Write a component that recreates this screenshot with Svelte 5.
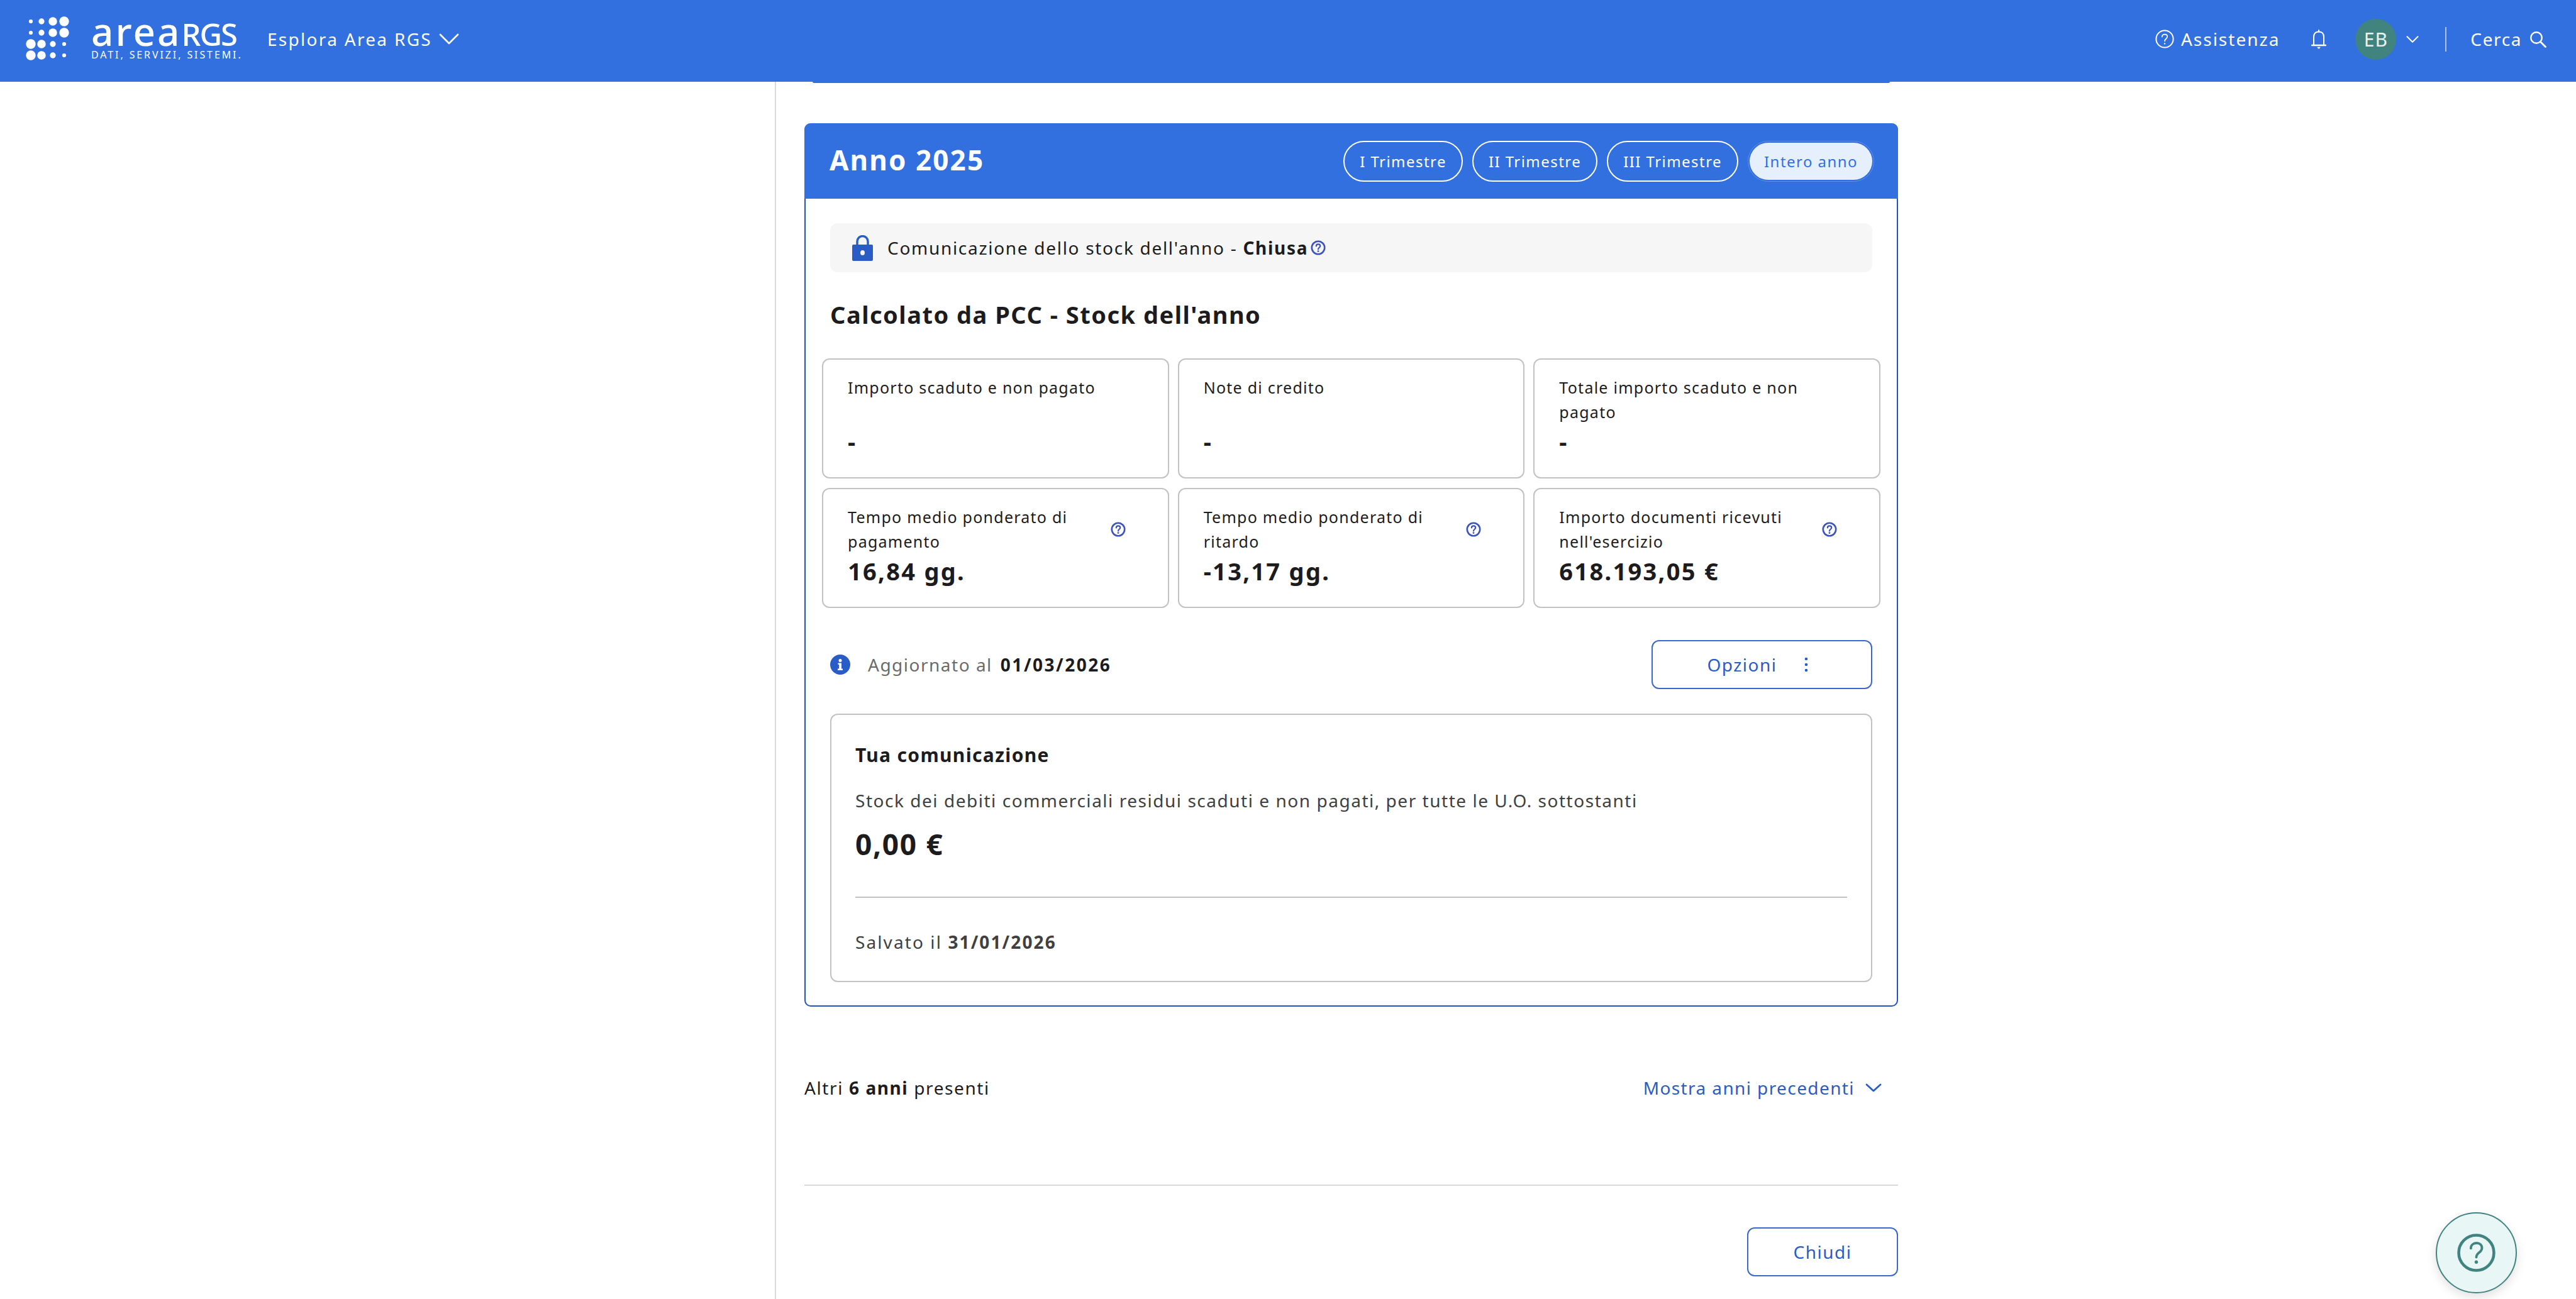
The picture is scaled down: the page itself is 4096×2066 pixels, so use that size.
<script>
  const logoDots = [
    [6.2, 9.3, 13.5, 15.4],
    [6.2, 9.3, 13.5, 15.4],
    [15.4, 13.5, 9.3, 6.2],
    [15.4, 13.5, 9.3, 6.2]
  ];
  const xs = [9, 26, 44, 62];
  const ys = [8, 26, 44, 62];
  const tiles = [
    { label: 'Importo scaduto e non pagato', value: '-', help: false },
    { label: 'Note di credito', value: '-', help: false },
    { label: 'Totale importo scaduto e non pagato', value: '-', help: false },
    { label: 'Tempo medio ponderato di pagamento', value: '16,84 gg.', help: true },
    { label: 'Tempo medio ponderato di ritardo', value: '-13,17 gg.', help: true },
    { label: "Importo documenti ricevuti nell'esercizio", value: '618.193,05 €', help: true }
  ];
  const pills = ['I Trimestre', 'II Trimestre', 'III Trimestre'];
</script>

{#snippet helpIcon(cls)}
  <svg class={cls} viewBox="0 0 24 24" fill="none" aria-hidden="true">
    <circle cx="12" cy="12" r="10.2" stroke="currentColor" stroke-width="2.6" />
    <path d="M8.9 9.4c0-1.8 1.4-3 3.2-3s3.1 1.1 3.1 2.8c0 2.5-3.2 2.6-3.2 5.2" stroke="currentColor" stroke-width="2.2" stroke-linecap="round" />
    <circle cx="12" cy="17.6" r="1.4" fill="currentColor" />
  </svg>
{/snippet}

<div class="app">
  <header class="topbar">
    <div class="logo">
      <svg class="dots" viewBox="0 0 72 72" aria-hidden="true">
        {#each logoDots as row, r}
          {#each row as d, c}
            <circle cx={xs[c]} cy={ys[r]} r={d / 2} fill="#fff" />
          {/each}
        {/each}
      </svg>
      <div class="wordmark">
        <div class="brand"><span class="brand-a">area</span><span class="brand-b">RGS</span></div>
        <div class="tagline">DATI, SERVIZI, SISTEMI.</div>
      </div>
    </div>
    <button class="explore">
      <span>Esplora Area RGS</span>
      <svg viewBox="0 0 32 18" class="chev-lg" fill="none" aria-hidden="true"><path d="M2 2l14 14L30 2" stroke="#fff" stroke-width="2.6" stroke-linecap="round" stroke-linejoin="round" /></svg>
    </button>

    <div class="right">
      <div class="assist">
        <svg class="assist-ic" viewBox="0 0 30 30" fill="none" aria-hidden="true">
          <circle cx="15" cy="15" r="13.6" stroke="#fff" stroke-width="2" />
          <path d="M10.8 11.6c0-2.4 1.9-4 4.3-4s4.1 1.5 4.1 3.7c0 3.4-4.2 3.4-4.2 7" stroke="#fff" stroke-width="1.8" stroke-linecap="round" />
          <circle cx="15" cy="22.4" r="1.2" fill="#fff" />
        </svg>
        <span>Assistenza</span>
      </div>
      <svg class="bell" viewBox="0 0 24 31" fill="none" aria-hidden="true">
        <path d="M4 24V11.5C4 6.5 7.2 3.4 12 3.4s8 3.1 8 8.1V24" stroke="#fff" stroke-width="2" />
        <path d="M1 25h22" stroke="#fff" stroke-width="2.4" stroke-linecap="round" />
        <path d="M12 1v2.4" stroke="#fff" stroke-width="2" stroke-linecap="round" />
        <path d="M9.5 27.8h5c-.3 1.6-1.2 2.6-2.5 2.6s-2.2-1-2.5-2.6z" fill="#fff" />
      </svg>
      <div class="avatar">EB</div>
      <svg class="chev-sm" viewBox="0 0 20 11" fill="none" aria-hidden="true"><path d="M1.5 1.2L10 9.8l8.500-8.600" stroke="#fff" stroke-width="2" stroke-linecap="round" stroke-linejoin="round" /></svg>
      <div class="sep"></div>
      <div class="search">
        <span>Cerca</span>
        <svg viewBox="0 0 27 27" fill="none" aria-hidden="true">
          <circle cx="11" cy="11" r="8.800" stroke="#fff" stroke-width="2.400" />
          <path d="M17.500 17.500l8 8" stroke="#fff" stroke-width="2.800" stroke-linecap="round" />
        </svg>
      </div>
    </div>
  </header>

  <div class="page">
    <aside class="side"></aside>
    <main class="main">
      <div class="prev-edge"></div>

      <section class="card">
        <div class="card-head">
          <h2>Anno 2025</h2>
          <div class="pills">
            {#each pills as p}
              <span class="pill">{p}</span>
            {/each}
            <span class="pill active">Intero anno</span>
          </div>
        </div>

        <div class="card-body">
          <div class="strip">
            <svg class="lock" viewBox="0 0 33 41" fill="none" aria-hidden="true">
              <path d="M8 17V10a8.500 8.500 0 0117 0v7" stroke="#2a5cc8" stroke-width="3.400" />
              <path fill-rule="evenodd" clip-rule="evenodd" d="M2 15h29a2 2 0 012 2v22a2 2 0 01-2 2H2a2 2 0 01-2-2V17a2 2 0 012-2zm14.500 9a3.500 4 0 100 8 3.500 4 0 000-8z" fill="#2a5cc8" />
            </svg>
            <span class="strip-text">Comunicazione dello stock dell'anno - <b>Chiusa</b></span>
            {@render helpIcon('q q-strip')}
          </div>

          <h3 class="section-title">Calcolato da PCC - Stock dell'anno</h3>

          <div class="grid">
            {#each tiles as t}
              <div class="tile">
                <div class="tile-top">
                  <div class="tile-label">{t.label}</div>
                  {#if t.help}{@render helpIcon('q')}{/if}
                </div>
                <div class="tile-value">{t.value}</div>
              </div>
            {/each}
          </div>

          <div class="updated">
            <div class="updated-left">
              <svg class="info" viewBox="0 0 32 32" aria-hidden="true">
                <circle cx="16" cy="16" r="16" fill="#2a5cc8" />
                <circle cx="16" cy="9.500" r="2.500" fill="#fff" />
                <path d="M12.500 13.500H18v9h2v2.500h-8v-2.500h2.200v-6.500h-1.700z" fill="#fff" />
              </svg>
              <span class="upd-label">Aggiornato al</span>
              <b class="upd-date">01/03/2026</b>
            </div>
            <button class="btn opts">
              <span>Opzioni</span>
              <svg class="kebab" viewBox="0 0 6 24" aria-hidden="true">
                <circle cx="3" cy="3" r="2.300" fill="#2a5cc8" />
                <circle cx="3" cy="12" r="2.300" fill="#2a5cc8" />
                <circle cx="3" cy="21" r="2.300" fill="#2a5cc8" />
              </svg>
            </button>
          </div>

          <div class="yours">
            <div class="yours-title">Tua comunicazione</div>
            <div class="yours-desc">Stock dei debiti commerciali residui scaduti e non pagati, per tutte le U.O. sottostanti</div>
            <div class="yours-value">0,00 €</div>
            <div class="yours-rule"></div>
            <div class="yours-saved">Salvato il <b>31/01/2026</b></div>
          </div>
        </div>
      </section>

      <div class="others">
        <span>Altri <b>6 anni</b> presenti</span>
        <button class="show-prev">
          <span>Mostra anni precedenti</span>
          <svg viewBox="0 0 26 14" fill="none" aria-hidden="true"><path d="M2 2l11 10L24 2" stroke="#2a5cc8" stroke-width="2.800" stroke-linecap="round" stroke-linejoin="round" /></svg>
        </button>
      </div>

      <div class="rule"></div>

      <div class="actions">
        <button class="btn close">Chiudi</button>
      </div>
    </main>
  </div>

  <button class="fab" aria-label="Aiuto">
    <svg viewBox="0 0 60 60" fill="none" aria-hidden="true">
      <circle cx="30" cy="30" r="27.500" stroke="#41837f" stroke-width="4.500" />
      <path d="M21.500 23c0-5 3.800-8.200 8.800-8.200s8.500 3.100 8.500 7.700c0 7-8.800 7.200-8.800 14.500" stroke="#41837f" stroke-width="3.800" stroke-linecap="round" />
      <circle cx="30" cy="44.500" r="2.600" fill="#41837f" />
    </svg>
  </button>
</div>

<style>
  :global(body) {
    margin: 0;
    background: #fff;
    overflow: hidden;
  }
  .app {
    position: relative;
    height: 2066px;
    overflow: hidden;
    font-family: "Noto Sans", "Open Sans", sans-serif;
    color: #1c1c1e;
  }
  button {
    font: inherit;
    background: none;
    border: 0;
    padding: 0;
    cursor: pointer;
  }
  b { font-weight: 700; }

  .topbar {
    height: 130px;
    background: #3370df;
    color: #fff;
    display: flex;
    align-items: center;
    padding: 0 47px 6px 40px;
    box-sizing: border-box;
  }
  .logo {
    display: flex;
    align-items: center;
    gap: 33px;
  }
  .dots {
    width: 72px;
    height: 72px;
    display: block;
  }
  .wordmark {
    width: 240px;
    margin-top: -2px;
  }
  .brand {
    height: 52px;
    line-height: 46px;
    white-space: nowrap;
    font-weight: 500;
  }
  .brand-a {
    font-size: 62px;
    letter-spacing: 3px;
  }
  .brand-b {
    font-size: 49px;
    letter-spacing: -2px;
  }
  .tagline {
    font-size: 16px;
    line-height: 18px;
    letter-spacing: 2.900px;
    white-space: nowrap;
  }
  .explore {
    margin-left: 40px;
    display: flex;
    align-items: center;
    gap: 11px;
    color: #fff;
    font-size: 28px;
    letter-spacing: 2.300px;
    white-space: nowrap;
  }
  .chev-lg {
    width: 32px;
    height: 18px;
  }
  .right {
    margin-left: auto;
    display: flex;
    align-items: center;
    font-size: 28px;
    letter-spacing: 2px;
  }
  .assist {
    display: flex;
    align-items: center;
    gap: 11px;
  }
  .assist-ic {
    width: 30px;
    height: 30px;
  }
  .bell {
    width: 24px;
    height: 31px;
    margin-left: 50px;
  }
  .avatar {
    width: 65px;
    height: 65px;
    border-radius: 50%;
    background: #41837f;
    color: #e6f4f1;
    display: flex;
    align-items: center;
    justify-content: center;
    margin-left: 46px;
    letter-spacing: 1px;
    font-size: 30px;
  }
  .chev-sm {
    width: 20px;
    height: 11px;
    margin-left: 16px;
  }
  .sep {
    width: 2px;
    height: 39px;
    background: #a9c2ee;
    margin-left: 42px;
  }
  .search {
    display: flex;
    align-items: center;
    gap: 12px;
    margin-left: 38px;
    letter-spacing: 1.600px;
  }
  .search svg {
    width: 27px;
    height: 27px;
  }

  .page {
    display: flex;
    height: 1936px;
  }
  .side {
    width: 1232px;
    flex: none;
    border-right: 2px solid #d9d9d9;
    box-sizing: content-box;
  }
  .main {
    width: 1739px;
    margin-left: 45px;
    flex: none;
  }
  .prev-edge {
    height: 2px;
    margin: 0 13px;
    background: #3370df;
    border-radius: 0 0 3px 3px;
  }

  .card {
    margin-top: 64px;
    border: 2px solid #2353c0;
    border-top: 0;
    border-radius: 10px;
    box-sizing: border-box;
    height: 1405px;
  }
  .card-head {
    height: 120px;
    margin: 0 -2px;
    background: #3370df;
    border-radius: 10px 10px 0 0;
    display: flex;
    align-items: center;
    justify-content: space-between;
    padding: 0 38px 4px 40px;
    box-sizing: border-box;
    color: #fff;
  }
  .card-head h2 {
    margin: 0;
    font-size: 44px;
    font-weight: 700;
    letter-spacing: 2.100px;
    white-space: nowrap;
  }
  .pills {
    display: flex;
    gap: 15px;
    margin-top: 4px;
  }
  .pill {
    height: 65px;
    box-sizing: border-box;
    border: 2px solid #fff;
    border-radius: 33px;
    display: flex;
    align-items: center;
    padding: 0 24px;
    font-size: 24px;
    letter-spacing: 1.450px;
    white-space: nowrap;
  }
  .pill.active {
    background: #e6f0fc;
    background-clip: padding-box;
    color: #3370df;
    border: 3px solid transparent;
    padding: 0 23px;
    outline: 1px solid #5f8ee8;
    outline-offset: -1px;
  }

  .card-body {
    padding: 39px 39px 0;
  }
  .strip {
    height: 78px;
    background: #f6f6f6;
    border-radius: 12px;
    display: flex;
    align-items: center;
    padding-left: 35px;
    font-size: 28px;
    letter-spacing: 1.700px;
  }
  .lock {
    width: 33px;
    height: 41px;
    flex: none;
    margin-right: 23px;
  }
  .strip-text {
    white-space: nowrap;
  }
  .q {
    width: 24px;
    height: 24px;
    flex: none;
    color: #3d52bb;
  }
  .q-strip {
    margin-left: 4px;
  }
  .section-title {
    margin: 41px 0 44px;
    height: 52px;
    line-height: 52px;
    font-size: 38px;
    font-weight: 700;
    letter-spacing: 1.500px;
  }
  .grid {
    display: grid;
    grid-template-columns: repeat(3, 1fr);
    gap: 15px 14px;
    margin: 0 -13px;
  }
  .tile {
    height: 191px;
    box-sizing: border-box;
    border: 2px solid #c2c2c2;
    border-radius: 12px;
    padding: 25px 67px 0 39px;
  }
  .tile-top {
    display: flex;
    align-items: center;
    justify-content: space-between;
    gap: 10px;
    height: 78px;
  }
  .tile-label {
    font-size: 25px;
    line-height: 39px;
    letter-spacing: 1.250px;
    max-width: 410px;
    align-self: flex-start;
  }
  .tile-value {
    margin-top: 2px;
    font-size: 38px;
    line-height: 50px;
    font-weight: 700;
    letter-spacing: 2.300px;
    white-space: nowrap;
  }

  .updated {
    margin-top: 51px;
    display: flex;
    align-items: center;
    justify-content: space-between;
    height: 78px;
  }
  .updated-left {
    display: flex;
    align-items: center;
    font-size: 28px;
    letter-spacing: 1.500px;
    white-space: nowrap;
  }
  .info {
    width: 32px;
    height: 32px;
    margin-right: 28px;
  }
  .upd-label {
    color: #6b6b6b;
    margin-right: 13px;
  }
  .upd-date {
    letter-spacing: 2.500px;
  }
  .btn {
    box-sizing: border-box;
    border: 2px solid #3a68cc;
    border-radius: 12px;
    color: #2a5cc8;
    background: #fff;
    font-size: 28px;
    letter-spacing: 1.500px;
  }
  .opts {
    width: 351px;
    height: 78px;
    display: flex;
    align-items: center;
    justify-content: center;
    gap: 43px;
    padding-right: 14px;
  }
  .kebab {
    width: 6px;
    height: 24px;
  }

  .yours {
    margin-top: 39px;
    height: 427px;
    box-sizing: border-box;
    border: 2px solid #c2c2c2;
    border-radius: 12px;
    padding: 44px 38px 0;
  }
  .yours-title {
    font-size: 30px;
    line-height: 40px;
    font-weight: 700;
    letter-spacing: 1.350px;
  }
  .yours-desc {
    margin-top: 32px;
    font-size: 28px;
    line-height: 40px;
    letter-spacing: 1.530px;
    color: #404040;
    white-space: nowrap;
  }
  .yours-value {
    margin-top: 21px;
    font-size: 46px;
    line-height: 56px;
    font-weight: 700;
    letter-spacing: 1.700px;
  }
  .yours-rule {
    margin-top: 56px;
    height: 2px;
    background: #c2c2c2;
  }
  .yours-saved {
    margin-top: 50px;
    font-size: 28px;
    line-height: 40px;
    letter-spacing: 2.100px;
    color: #404040;
  }

  .others {
    margin-top: 104px;
    height: 50px;
    display: flex;
    align-items: center;
    justify-content: space-between;
    padding-right: 26px;
    font-size: 28px;
    letter-spacing: 1.600px;
  }
  .show-prev {
    display: flex;
    align-items: center;
    gap: 17px;
    color: #2a5cc8;
    letter-spacing: 1.400px;
  }
  .show-prev svg {
    width: 26px;
    height: 14px;
  }
  .rule {
    margin-top: 129px;
    height: 2px;
    background: #d9d9d9;
  }
  .actions {
    margin-top: 65px;
    display: flex;
    justify-content: flex-end;
  }
  .close {
    width: 240px;
    height: 78px;
    margin-top: 1px;
  }

  .fab {
    position: absolute;
    left: 3873px;
    top: 1928px;
    width: 129px;
    height: 129px;
    border-radius: 50%;
    box-sizing: border-box;
    background: #e8f7f6;
    border: 2px solid #41837f;
    box-shadow: 0 6px 16px rgba(0, 0, 0, 0.12);
    display: flex;
    align-items: center;
    justify-content: center;
  }
  .fab svg {
    width: 61px;
    height: 61px;
  }
</style>
